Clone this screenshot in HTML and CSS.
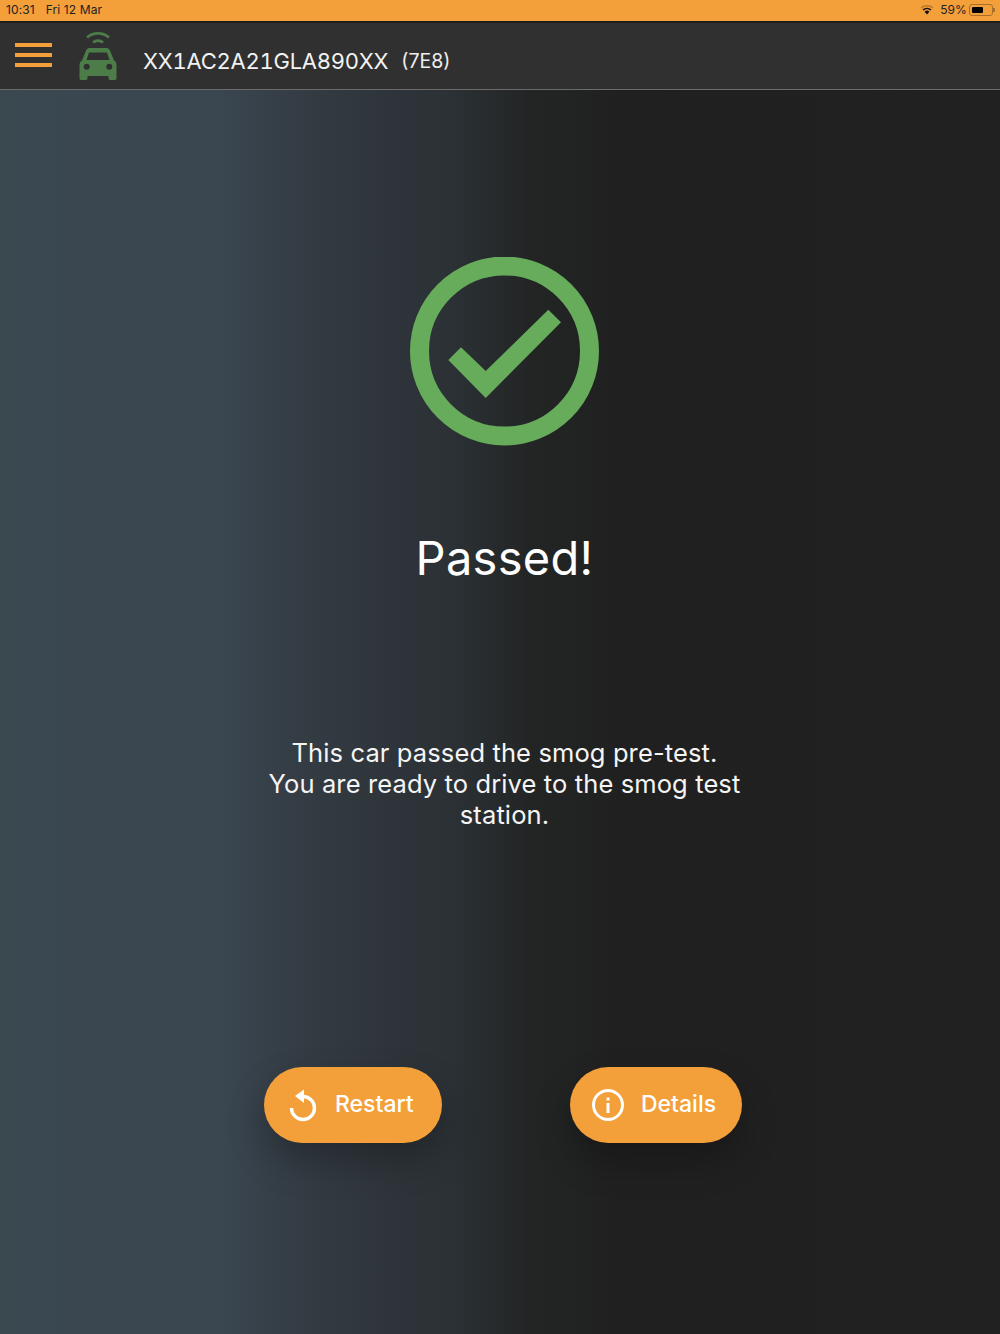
FILE: index.html
```html
<!DOCTYPE html>
<html lang="en">
<head>
  <meta charset="UTF-8">
  <meta name="viewport" content="width=device-width, initial-scale=1.0">
  <title>Smog pre-test result</title>
  <link rel="stylesheet" href="styles.css">
</head>
<body>
  <div class="status-bar">
    <div class="status-left">
      <span>10:31</span>
      <span>Fri 12 Mar</span>
    </div>
    <div class="status-right">
      <svg class="wifi" width="14" height="11" viewBox="0 0 14 11">
        <path d="M1 4 A9 9 0 0 1 13 4" fill="none" stroke="#b9772a" stroke-width="1.5"/>
        <path d="M3 6 A6 6 0 0 1 11 6" fill="none" stroke="#111" stroke-width="1.6"/>
        <path d="M7 10.5 L4.6 7.8 A3.4 3.4 0 0 1 9.4 7.8 Z" fill="#111"/>
      </svg>
      <span>59%</span>
      <div class="battery"><div class="battery-level" style="width: 59%"></div></div>
      <div class="battery-tip"></div>
    </div>
  </div>

  <header class="app-bar">
    <div class="menu-icon"><span></span><span></span><span></span></div>
    <svg class="car-icon" width="38" height="50" viewBox="0 0 38 50">
      <path d="M8 5.500 A17 17 0 0 1 30 5.500" fill="none" stroke="#4c7c48" stroke-width="2.8"/>
      <path d="M14 10.500 A8 8 0 0 1 24 10.500" fill="none" stroke="#4c7c48" stroke-width="2.8"/>
      <path fill-rule="evenodd" fill="#4c7c48" d="M10 16 H28 Q30 16 31 18.500 L35 28.500 Q37.500 29.500 37.500 32.500 V46 Q37.500 48 36 48 H31 Q29.500 48 29.500 46 V44 H8.500 V46 Q8.500 48 7 48 H2 Q0.500 48 0.500 46 V32.500 Q0.500 29.500 3 28.500 L7 18.500 Q8 16 10 16 Z M10 20.500 L7.500 28 H30.500 L28 20.500 Z M7.700 31.700 A3 3 0 1 0 7.700 37.700 A3 3 0 1 0 7.700 31.700 Z M30.300 31.700 A3 3 0 1 0 30.300 37.700 A3 3 0 1 0 30.300 31.700 Z"/>
    </svg>
    <div class="vin">XX1AC2A21GLA890XX</div>
    <div class="ecu">(7E8)</div>
  </header>

  <main class="result-page">
    <svg class="pass-icon" width="190" height="190" viewBox="0 0 190 190">
      <circle cx="94.500" cy="94" r="85" fill="none" stroke="#66ac5b" stroke-width="19"/>
      <polygon fill="#66ac5b" points="38.300,103 51,90.300 75.700,114 138.300,52.700 151,65.300 75.700,141"/>
    </svg>
    <h1 class="result-title">Passed!</h1>
    <p class="result-text">This car passed the smog pre-test.<br>You are ready to drive to the smog test station.</p>
    <div class="actions">
      <button class="action-button restart">
        <svg width="28" height="34" viewBox="0 0 28 34">
          <path d="M2.500 20 A11.500 11.500 0 1 0 14 8.500 H12" fill="none" stroke="#fff" stroke-width="3.400"/>
          <polygon fill="#fff" points="15,1.500 15,15 6,8"/>
        </svg>
        <span>Restart</span>
      </button>
      <button class="action-button details">
        <svg width="32" height="32" viewBox="0 0 32 32">
          <circle cx="16" cy="16" r="14.500" fill="none" stroke="#fff" stroke-width="3"/>
          <rect x="14.500" y="14" width="3" height="10" fill="#fff"/>
          <rect x="14.500" y="8.500" width="3" height="3" fill="#fff"/>
        </svg>
        <span>Details</span>
      </button>
    </div>
  </main>
</body>
</html>
```

FILE: styles.css
```css
* {
  margin: 0;
  padding: 0;
  box-sizing: border-box;
}

body {
  width: 1000px;
  height: 1334px;
  overflow: hidden;
  font-family: Inter, Roboto, sans-serif;
  color: #fff;
  background: #222;
}

.status-bar {
  height: 23px;
  padding: 0 5px 2px 6px;
  display: flex;
  justify-content: space-between;
  align-items: center;
  background: #f39f3a;
  border-bottom: 2px solid #1e1e1e;
  color: #222;
  font-size: 12px;
  letter-spacing: 0.1px;
}

.status-left {
  display: flex;
  gap: 11px;
}

.status-right {
  display: flex;
  align-items: center;
  gap: 4px;
}

.wifi {
  margin-right: 2px;
}

.battery {
  width: 24px;
  height: 12px;
  margin-left: -2px;
  padding: 2px;
  border: 1px solid #a96f28;
  border-radius: 3px;
}

.battery-level {
  height: 100%;
  background: #000;
  border-radius: 1px;
}

.battery-tip {
  width: 2px;
  height: 4px;
  margin-left: -4px;
  background: #a96f28;
}

.app-bar {
  height: 67px;
  padding-left: 15px;
  display: flex;
  align-items: center;
  background: #303030;
  border-bottom: 1px solid #6b6b6b;
}

.menu-icon {
  width: 37px;
  margin-right: 27px;
  margin-bottom: 2px;
  display: flex;
  flex-direction: column;
  gap: 6px;
}

.menu-icon span {
  height: 4px;
  background: #f39f3a;
}

.car-icon {
  margin-top: 1px;
}

.vin {
  margin-left: 26px;
  margin-top: 9px;
  font-size: 22px;
  letter-spacing: -0.25px;
  font-feature-settings: "tnum";
  color: #f2f2f2;
}

.ecu {
  margin-left: 13px;
  margin-top: 10px;
  font-size: 19.500px;
  color: #eee;
}

.result-page {
  height: 1244px;
  padding: 167px 0 0 9px;
  display: flex;
  flex-direction: column;
  align-items: center;
  background: linear-gradient(90deg, #3a4850 0%, #3a4650 22%, #343c44 30%, #2f363c 37%, #2b3135 45%, #232525 53%, #202020 62%, #212121 100%);
}

.pass-icon {
  display: block;
}

.result-title {
  margin-top: 83px;
  font-size: 47px;
  line-height: 56px;
  font-weight: 400;
  letter-spacing: 0.3px;
}

.result-text {
  width: 500px;
  margin-top: 151px;
  font-size: 25.500px;
  line-height: 31px;
  letter-spacing: 0.12px;
  text-align: center;
  color: #f5f5f5;
}

.actions {
  margin-top: 237px;
  margin-right: 3px;
  display: flex;
  gap: 128px;
}

.action-button {
  height: 76px;
  display: flex;
  align-items: center;
  border: none;
  border-radius: 38px;
  background: #f39f3a;
  color: #fff;
  font-family: inherit;
  font-size: 23px;
  font-weight: 500;
  box-shadow: 0 18px 36px rgba(0, 0, 0, 0.25);
}

.action-button svg {
  flex-shrink: 0;
}

.action-button span {
  margin-bottom: 2px;
}

.restart {
  width: 178px;
  padding-left: 25px;
  gap: 18px;
}

.details {
  width: 172px;
  padding-left: 22px;
  gap: 17px;
}
```
